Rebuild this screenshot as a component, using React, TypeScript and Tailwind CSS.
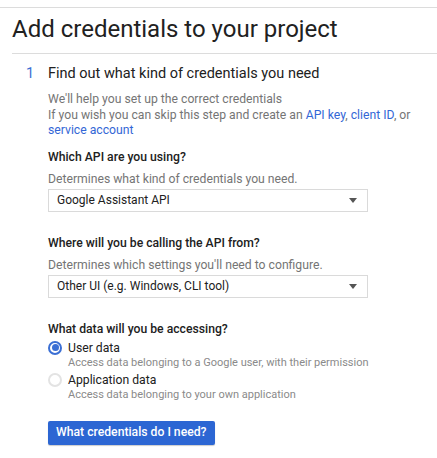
import React, { useState } from 'react';

const font = { fontFamily: 'Roboto, "Liberation Sans", Arial, sans-serif' };

const SelectBox: React.FC<{ value: string }> = ({ value }) => (
    <div className="mt-[2px] flex h-[23px] w-[320px] items-center justify-between border border-[#dadada] bg-white pl-[8px] pr-[10px] text-[12px] text-[#212121]">
        <span>{value}</span>
        <span className="h-0 w-0 border-x-[4.5px] border-t-[5px] border-x-transparent border-t-[#555]" />
    </div>
);

const Radio: React.FC<{ checked: boolean; onClick: () => void }> = ({ checked, onClick }) => (
    <button
        onClick={onClick}
        className={`flex h-[14px] w-[14px] items-center justify-center rounded-full border-2 ${checked ? 'border-[#3b6fd4]' : 'border-[#e3e3e3]'}`}
    >
        {checked && <span className="h-[7px] w-[7px] rounded-full bg-[#3b6fd4]" />}
    </button>
);

export default function App() {
    const [data, setData] = useState<'user' | 'app'>('user');

    return (
        <div style={font} className="h-[458px] w-[437px] overflow-hidden bg-white">
            <div className="mt-[7px] border-t border-[#dcdcdc]" />
            <h1 className="ml-[12px] h-[45px] pt-[6px] text-[24px] leading-[30px] text-[#212121]">
                Add credentials to your project
            </h1>
            <div className="ml-[12px] border-t border-[#dcdcdc]" />

            <div className="mt-[12px] flex items-center leading-[16px]">
                <span className="w-[48px] pl-[26px] text-[14.5px] text-[#3b6fd4]">1</span>
                <span className="text-[14.5px] text-[#212121]">Find out what kind of credentials you need</span>
            </div>

            <div className="ml-[48px] mt-[10px] text-[12.2px] leading-[15.5px] text-[#757575]">
                <p>We'll help you set up the correct credentials</p>
                <p>
                    If you wish you can skip this step and create an{' '}
                    <a className="text-[#3367d6]">API key</a>,{' '}
                    <a className="text-[#3367d6]">client ID</a>, or
                </p>
                <p>
                    <a className="text-[#3367d6]">service account</a>
                </p>
            </div>

            <div className="ml-[48px] mt-[10px]">
                <p className="text-[12.2px] font-medium leading-[16px] text-[#212121]">Which API are you using?</p>
                <p className="mt-[6px] text-[12.2px] leading-[16px] text-[#757575]">Determines what kind of credentials you need.</p>
                <SelectBox value="Google Assistant API" />
            </div>

            <div className="ml-[48px] mt-[23px]">
                <p className="text-[12.2px] font-medium leading-[16px] text-[#212121]">Where will you be calling the API from?</p>
                <p className="mt-[6px] text-[12.2px] leading-[16px] text-[#757575]">Determines which settings you'll need to configure.</p>
                <SelectBox value="Other UI (e.g. Windows, CLI tool)" />
            </div>

            <div className="ml-[48px] mt-[23px]">
                <p className="text-[12.2px] font-medium leading-[16px] text-[#212121]">What data will you be accessing?</p>
                <div className="mt-[3px] flex h-[16px] items-center gap-[6px]">
                    <Radio checked={data === 'user'} onClick={() => setData('user')} />
                    <span className="text-[12.2px] leading-[16px] text-[#212121]">User data</span>
                </div>
                <p className="ml-[20px] text-[11px] leading-[14px] text-[#8a8a8a]">Access data belonging to a Google user, with their permission</p>
                <div className="mt-[2px] flex h-[16px] items-center gap-[6px]">
                    <Radio checked={data === 'app'} onClick={() => setData('app')} />
                    <span className="text-[12.2px] leading-[16px] text-[#212121]">Application data</span>
                </div>
                <p className="ml-[20px] text-[11px] leading-[14px] text-[#8a8a8a]">Access data belonging to your own application</p>

                <button className="mt-[19px] h-[24px] rounded-[2px] bg-[#2c66d3] px-[8px] text-[12.2px] font-medium text-white shadow-[0_1px_1px_rgba(0,0,0,0.2)]">
                    What credentials do I need?
                </button>
            </div>
        </div>
    );
}
